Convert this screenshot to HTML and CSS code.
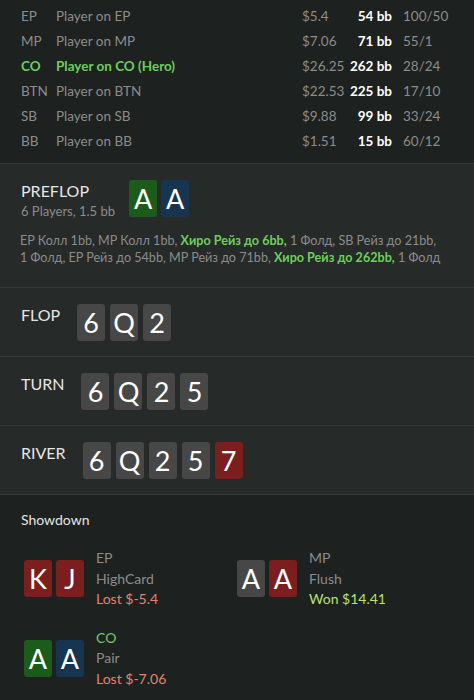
FILE: index.html
```html
<!DOCTYPE html>
<html lang="ru">
<head>
    <meta charset="UTF-8">
    <meta name="viewport" content="width=device-width, initial-scale=1.0">
    <title>Hand History</title>
    <link rel="stylesheet" href="styles.css">
</head>
<body>
    <div class="players">
        <div class="player-row">
            <span class="pos">EP</span><span class="name">Player on EP</span><span class="money">$5.4</span><span class="stack">54 bb</span><span class="stat">100/50</span>
        </div>
        <div class="player-row">
            <span class="pos">MP</span><span class="name">Player on MP</span><span class="money">$7.06</span><span class="stack">71 bb</span><span class="stat">55/1</span>
        </div>
        <div class="player-row hero">
            <span class="pos">CO</span><span class="name">Player on CO (Hero)</span><span class="money">$26.25</span><span class="stack">262 bb</span><span class="stat">28/24</span>
        </div>
        <div class="player-row">
            <span class="pos">BTN</span><span class="name">Player on BTN</span><span class="money">$22.53</span><span class="stack">225 bb</span><span class="stat">17/10</span>
        </div>
        <div class="player-row">
            <span class="pos">SB</span><span class="name">Player on SB</span><span class="money">$9.88</span><span class="stack">99 bb</span><span class="stat">33/24</span>
        </div>
        <div class="player-row">
            <span class="pos">BB</span><span class="name">Player on BB</span><span class="money">$1.51</span><span class="stack">15 bb</span><span class="stat">60/12</span>
        </div>
    </div>

    <section class="street">
        <div class="street-head">
            <div class="street-title">
                <div class="street-name">PREFLOP</div>
                <div class="street-info">6 Players, 1.5 bb</div>
            </div>
            <div class="cards">
                <span class="card green">A</span><span class="card blue">A</span>
            </div>
        </div>
        <p class="actions">EP&nbsp;Колл&nbsp;1bb, MP&nbsp;Колл&nbsp;1bb, <b class="hero-act">Хиро&nbsp;Рейз&nbsp;до&nbsp;6bb,</b> 1&nbsp;Фолд, SB&nbsp;Рейз&nbsp;до&nbsp;21bb, 1&nbsp;Фолд, EP&nbsp;Рейз&nbsp;до&nbsp;54bb, MP&nbsp;Рейз&nbsp;до&nbsp;71bb, <b class="hero-act">Хиро&nbsp;Рейз&nbsp;до&nbsp;262bb,</b> 1&nbsp;Фолд</p>
    </section>

    <section class="street">
        <div class="street-head">
            <div class="street-name">FLOP</div>
            <div class="cards">
                <span class="card">6</span><span class="card">Q</span><span class="card">2</span>
            </div>
        </div>
    </section>

    <section class="street">
        <div class="street-head">
            <div class="street-name">TURN</div>
            <div class="cards">
                <span class="card">6</span><span class="card">Q</span><span class="card">2</span><span class="card">5</span>
            </div>
        </div>
    </section>

    <section class="street">
        <div class="street-head">
            <div class="street-name">RIVER</div>
            <div class="cards">
                <span class="card">6</span><span class="card">Q</span><span class="card">2</span><span class="card">5</span><span class="card red">7</span>
            </div>
        </div>
    </section>

    <section class="showdown">
        <h3>Showdown</h3>
        <div class="hands">
            <div class="hand">
                <div class="cards">
                    <span class="card red">K</span><span class="card red">J</span>
                </div>
                <div class="hand-info">
                    <div>EP</div>
                    <div>HighCard</div>
                    <div class="lost">Lost $-5.4</div>
                </div>
            </div>
            <div class="hand">
                <div class="cards">
                    <span class="card">A</span><span class="card red">A</span>
                </div>
                <div class="hand-info">
                    <div>MP</div>
                    <div>Flush</div>
                    <div class="won">Won $14.41</div>
                </div>
            </div>
            <div class="hand">
                <div class="cards">
                    <span class="card green">A</span><span class="card blue">A</span>
                </div>
                <div class="hand-info">
                    <div class="hero-pos">CO</div>
                    <div>Pair</div>
                    <div class="lost">Lost $-7.06</div>
                </div>
            </div>
        </div>
    </section>
</body>
</html>
```

FILE: styles.css
```css
body {
    font-family: 'Lato', 'Open Sans', sans-serif;
    background-color: #1d211f;
    color: #8c8c8c;
    margin: 0;
}
.players {
    padding: 4px 0 9px 21px;
    border-bottom: 1px solid #343937;
}
.player-row {
    display: grid;
    grid-template-columns: 35px 246px 40px 50px auto;
    height: 25px;
    line-height: 25px;
    font-size: 13.5px;
}
.player-row .money {
    white-space: nowrap;
}
.player-row .stack {
    text-align: right;
    color: #ffffff;
    font-weight: bold;
}
.player-row .stat {
    padding-left: 11px;
}
.player-row.hero .pos,
.player-row.hero .name {
    color: #6dce5d;
    font-weight: bold;
}
.street {
    background: #262a29;
    border-bottom: 1px solid #343937;
    padding: 16px 20px 15px;
}
.street-head {
    display: flex;
    align-items: flex-start;
    gap: 17px;
}
.street-name {
    color: #e6e6e6;
    font-size: 16px;
    line-height: 22px;
    padding-left: 1px;
}
.street-info {
    font-size: 13px;
    line-height: 18px;
    padding-left: 1px;
}
.street-title + .cards {
    margin-left: -3px;
    gap: 4px;
}
.cards {
    display: flex;
    gap: 5px;
}
.card {
    display: block;
    width: 28px;
    height: 37px;
    line-height: 37px;
    text-align: center;
    border-radius: 3px;
    background: #474747;
    color: #ffffff;
    font-size: 27px;
}
.card.green { background: #1c5c1a; }
.card.blue { background: #173550; }
.card.red { background: #7b1e1e; }
.actions {
    margin: 12px 0 6px;
    font-size: 12.6px;
    line-height: 17px;
}
.hero-act {
    color: #6dce5d;
}
.showdown {
    padding: 15px 0 0 24px;
}
.showdown h3 {
    margin: 0 0 18px -3px;
    font-size: 14px;
    font-weight: normal;
    color: #e6e6e6;
    line-height: 20px;
}
.hands {
    display: grid;
    grid-template-columns: 213px 213px;
    row-gap: 18px;
}
.hand {
    display: flex;
    align-items: center;
    gap: 12px;
}
.hand .cards {
    gap: 4px;
}
.hand-info {
    font-size: 14px;
    line-height: 20.5px;
}
.lost { color: #e8806f; }
.won { color: #b5e36e; }
.hero-pos { color: #6dce5d; }
```
